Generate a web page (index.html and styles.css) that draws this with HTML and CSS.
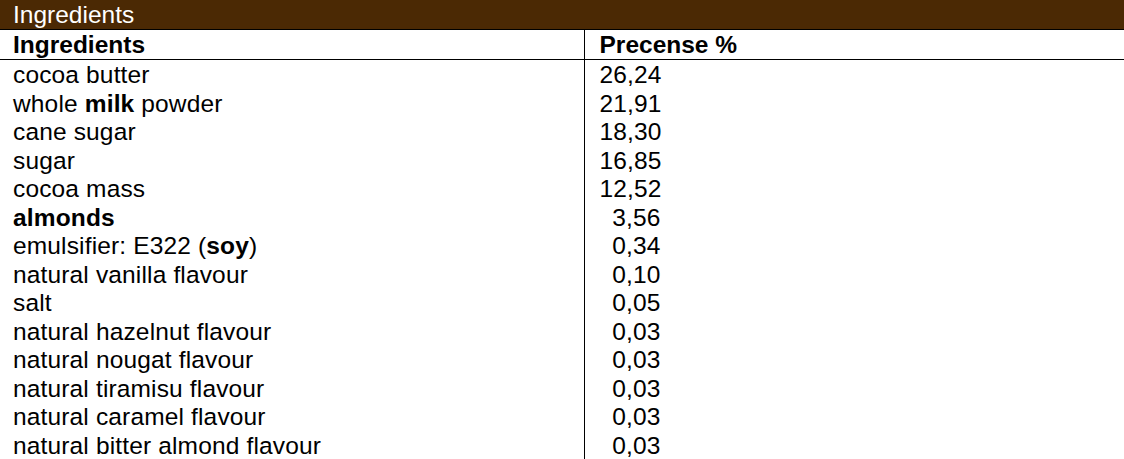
FILE: index.html
```html
<!DOCTYPE html>
<html lang="en">
<head>
    <meta charset="UTF-8">
    <title>Ingredients</title>
    <link rel="stylesheet" href="styles.css">
</head>
<body>

    <div class="panel">
        <div class="panel-title">Ingredients</div>

        <table class="ingredients">
            <colgroup>
                <col class="col-name">
                <col>
            </colgroup>
            <thead>
                <tr><th>Ingredients</th><th>Precense %</th></tr>
            </thead>
            <tbody>
                <tr><td>cocoa butter</td><td><span class="num">26,24</span></td></tr>
                <tr><td>whole <b>milk</b> powder</td><td><span class="num">21,91</span></td></tr>
                <tr><td>cane sugar</td><td><span class="num">18,30</span></td></tr>
                <tr><td>sugar</td><td><span class="num">16,85</span></td></tr>
                <tr><td>cocoa mass</td><td><span class="num">12,52</span></td></tr>
                <tr><td><b>almonds</b></td><td><span class="num">3,56</span></td></tr>
                <tr><td>emulsifier: E322 (<b>soy</b>)</td><td><span class="num">0,34</span></td></tr>
                <tr><td>natural vanilla flavour</td><td><span class="num">0,10</span></td></tr>
                <tr><td>salt</td><td><span class="num">0,05</span></td></tr>
                <tr><td>natural hazelnut flavour</td><td><span class="num">0,03</span></td></tr>
                <tr><td>natural nougat flavour</td><td><span class="num">0,03</span></td></tr>
                <tr><td>natural tiramisu flavour</td><td><span class="num">0,03</span></td></tr>
                <tr><td>natural caramel flavour</td><td><span class="num">0,03</span></td></tr>
                <tr><td>natural bitter almond flavour</td><td><span class="num">0,03</span></td></tr>
            </tbody>
        </table>
    </div>

</body>
</html>
```

FILE: styles.css
```css
body {
    margin: 0;
    font-family: 'Liberation Sans', Arial, sans-serif;
    font-size: 24.5px;
    color: #000;
    background: #fff;
}
.panel-title {
    background: #4b2904;
    color: #fff;
    height: 29px;
    line-height: 29px;
    padding-left: 13px;
    border-bottom: 1px solid #000;
}
.ingredients {
    width: 100%;
    border-collapse: collapse;
    table-layout: fixed;
}
.col-name {
    width: 584px;
}
.ingredients th,
.ingredients td {
    padding: 0 0 0 13px;
    text-align: left;
    white-space: nowrap;
}
.ingredients th:last-child,
.ingredients td:last-child {
    padding-left: 15px;
}
.ingredients th {
    height: 29px;
    line-height: 29px;
    font-weight: bold;
    border-bottom: 1px solid #000;
}
.ingredients td {
    height: 27.5px;
    padding-top: 1px;
    line-height: 27.5px;
    letter-spacing: 0.15px;
}
.ingredients th:first-child,
.ingredients td:first-child {
    border-right: 1px solid #000;
}
.num {
    display: inline-block;
    width: 61px;
    text-align: right;
}
```
